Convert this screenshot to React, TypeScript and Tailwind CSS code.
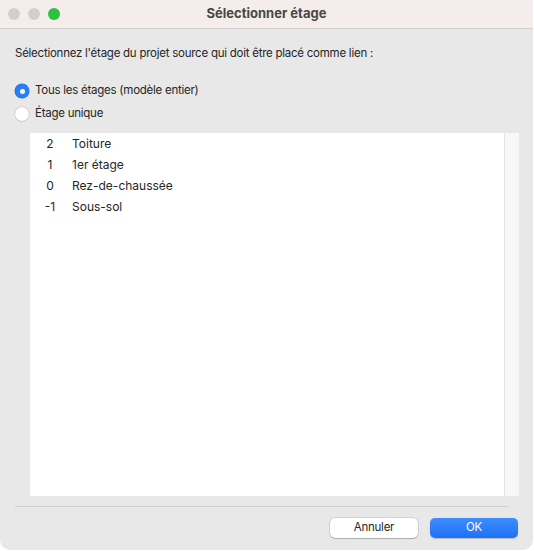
import React from "react";

const font = { fontFamily: "Inter, 'Noto Sans', sans-serif" };

function Radio({ checked }: { checked: boolean }) {
  if (checked) {
    return (
      <div className="w-[14px] h-[14px] rounded-full bg-[#2a7df7] flex items-center justify-center shadow-[0_0_0_0.5px_#1f6fe8]">
        <div className="w-[5px] h-[5px] rounded-full bg-white" />
      </div>
    );
  }
  return (
    <div className="w-[14px] h-[14px] rounded-full bg-white shadow-[0_0_0_0.5px_#bdbdbd,0_0.5px_1px_rgba(0,0,0,0.15)]" />
  );
}

const rows = [
  ["2", "Toiture"],
  ["1", "1er étage"],
  ["0", "Rez-de-chaussée"],
  ["-1", "Sous-sol"],
];

export default function App() {
  return (
    <div className="w-[534px] h-[551px] bg-white" style={font}>
      <div className="w-[533px] h-[550px] bg-[#e8e8e8] rounded-b-[10px] flex flex-col text-[11.5px] tracking-[-0.25px] text-[#262626]">
        {/* Title bar */}
        <div className="h-[29px] bg-[#f4edeb] border-b border-[#d3cfcf] flex items-center relative">
          <div className="absolute left-[8px] top-[8px] flex gap-[8px]">
            <div className="w-[12px] h-[12px] rounded-full bg-[#d4cfcf]" />
            <div className="w-[12px] h-[12px] rounded-full bg-[#d4cfcf]" />
            <div className="w-[12px] h-[12px] rounded-full bg-[#2cc23e]" />
          </div>
          <div className="flex-1 text-center font-bold text-[13px] tracking-normal text-[#4a4646]">Sélectionner étage</div>
        </div>

        <div className="px-[15px] pt-[16px] leading-[16px]">
          Sélectionnez l'étage du projet source qui doit être placé comme lien :
        </div>

        <div className="mt-[19px] pl-[15px] flex flex-col gap-[1px]">
          <div className="h-[22px] flex items-center gap-[6px]">
            <Radio checked />
            <span>Tous les étages (modèle entier)</span>
          </div>
          <div className="h-[22px] flex items-center gap-[6px]">
            <Radio checked={false} />
            <span>Étage unique</span>
          </div>
        </div>

        <div className="mt-[8px] ml-[30px] w-[489px] h-[363px] bg-white flex">
          <div className="flex-1 flex flex-col">
            {rows.map(([n, l]) => (
              <div key={l} className="h-[21px] flex items-center text-[12px] tracking-normal">
                <div className="w-[40px] text-center">{n}</div>
                <div className="ml-[2px]">{l}</div>
              </div>
            ))}
          </div>
          <div className="w-[15px] bg-[#f7f7f7] border-l border-[#e2e2e2]" />
        </div>

        <div className="mt-[10px] mx-[15px] w-[493px] h-px bg-[#cfcfcf]" />

        <div className="mt-[11px] pr-[15px] flex justify-end gap-[12px]">
          <button className="w-[88px] h-[20px] rounded-[5px] bg-white text-[#262626] shadow-[0_0_0_0.5px_rgba(0,0,0,0.18),0_1px_1px_rgba(0,0,0,0.18)] flex items-center justify-center">
            Annuler
          </button>
          <button className="w-[88px] h-[20px] rounded-[5px] bg-gradient-to-b from-[#3d8dfd] to-[#1f70f6] text-white shadow-[0_0.5px_1px_rgba(0,0,0,0.2)] flex items-center justify-center">
            OK
          </button>
        </div>
      </div>
    </div>
  );
}
